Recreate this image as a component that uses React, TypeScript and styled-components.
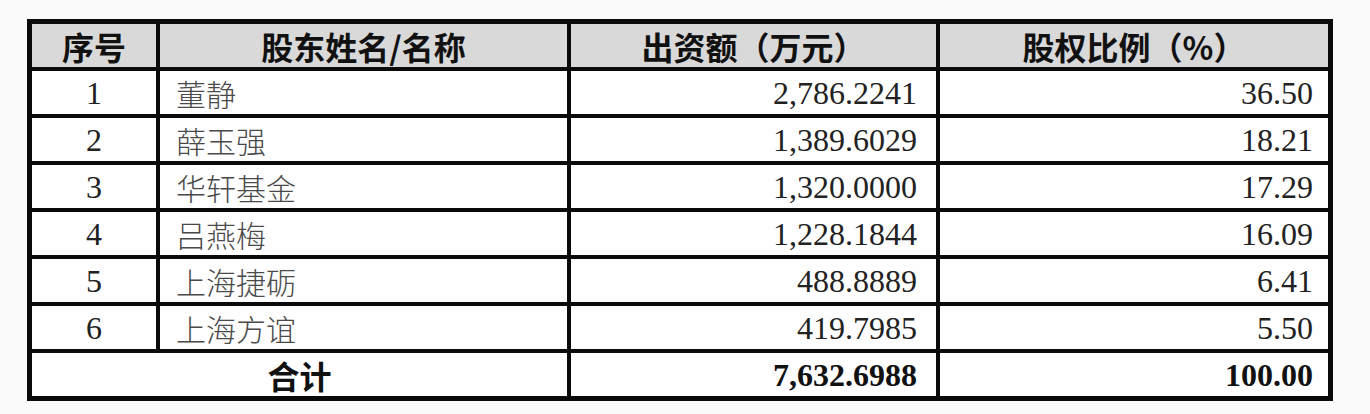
import React from "react";
import styled, { createGlobalStyle } from "styled-components";

const Global = createGlobalStyle`
  html, body { margin: 0; padding: 0; background: #fafafa; }
  body { font-family: "Liberation Serif", "Noto Sans CJK SC", serif; }
`;

const Page = styled.div`
  padding: 19px 0 0 27px;
  height: 414px;
  box-sizing: border-box;
`;

const Table = styled.div`
  display: grid;
  grid-template-columns: 124px 407px 365px 388px;
  grid-auto-rows: 43px;
  gap: 4px;
  padding: 5px;
  width: max-content;
  background: #0a0a0a;
`;

type CellProps = {
  $align?: "left" | "center" | "right";
  $head?: boolean;
  $bold?: boolean;
  $cjk?: boolean;
  $pr?: number;
  $span?: number;
};

const Cell = styled.div<CellProps>`
  display: flex;
  align-items: center;
  justify-content: ${(p) =>
    p.$align === "left" ? "flex-start" : p.$align === "right" ? "flex-end" : "center"};
  padding: 0 ${(p) => p.$pr ?? 0}px 0 ${(p) => (p.$align === "left" ? 16 : 0)}px;
  grid-column: ${(p) => (p.$span ? `span ${p.$span}` : "auto")};
  background: ${(p) => (p.$head ? "#d9d9d9" : "#fefefe")};
  color: ${(p) => (p.$head || p.$bold ? "#111" : p.$cjk ? "#4a4a4a" : "#222")};
  font-family: ${(p) =>
    p.$head || p.$cjk
      ? `"Noto Sans CJK SC", sans-serif`
      : `"Liberation Serif", "Noto Sans CJK SC", serif`};
  font-size: ${(p) => (p.$head || (p.$bold && p.$cjk) ? 32 : p.$cjk ? 30 : 32)}px;
  font-weight: ${(p) => (p.$head || p.$bold ? 700 : p.$cjk ? 300 : 400)};
  line-height: 1;
  white-space: nowrap;
`;

const rows = [
  ["1", "董静", "2,786.2241", "36.50"],
  ["2", "薛玉强", "1,389.6029", "18.21"],
  ["3", "华轩基金", "1,320.0000", "17.29"],
  ["4", "吕燕梅", "1,228.1844", "16.09"],
  ["5", "上海捷砺", "488.8889", "6.41"],
  ["6", "上海方谊", "419.7985", "5.50"],
];

export default function App() {
  return (
    <>
      <Global />
      <Page>
        <Table>
          <Cell $head>序号</Cell>
          <Cell $head>股东姓名/名称</Cell>
          <Cell $head>出资额（万元）</Cell>
          <Cell $head>股权比例（%）</Cell>
          {rows.map((r) => (
            <React.Fragment key={r[0]}>
              <Cell>{r[0]}</Cell>
              <Cell $align="left" $cjk>
                {r[1]}
              </Cell>
              <Cell $align="right" $pr={19}>
                {r[2]}
              </Cell>
              <Cell $align="right" $pr={15}>
                {r[3]}
              </Cell>
            </React.Fragment>
          ))}
          <Cell $span={2} $bold $cjk>
            合计
          </Cell>
          <Cell $align="right" $pr={19} $bold>
            7,632.6988
          </Cell>
          <Cell $align="right" $pr={15} $bold>
            100.00
          </Cell>
        </Table>
      </Page>
    </>
  );
}
